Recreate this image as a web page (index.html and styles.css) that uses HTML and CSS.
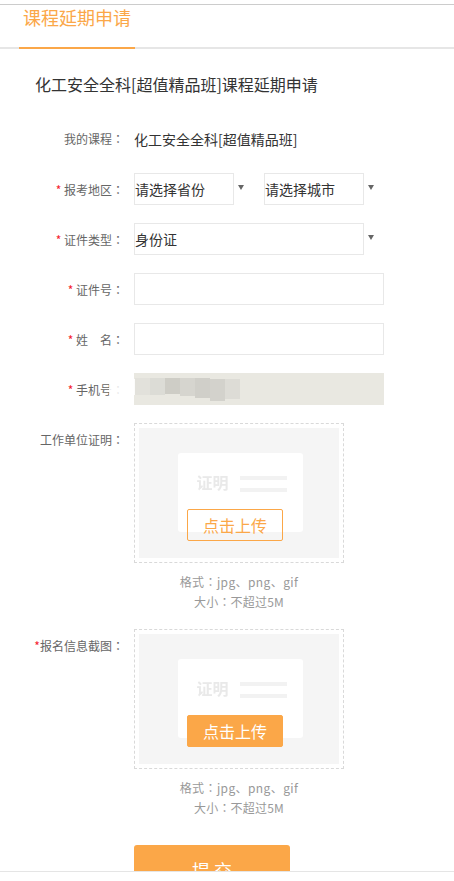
FILE: index.html
```html
<!DOCTYPE html>
<html lang="zh-CN">
<head>
    <meta charset="UTF-8">
    <title>课程延期申请</title>
    <link rel="stylesheet" href="styles.css">
</head>
<body>
    <div class="page">
        <div class="tabs">
            <div class="tab">课程延期申请</div>
        </div>
        <h2 class="heading">化工安全全科[超值精品班]课程延期申请</h2>

        <div class="row row-text">
            <div class="label">我的课程<span class="colon" lang="zh-Hant">：</span></div>
            <div class="course">化工安全全科[超值精品班]</div>
        </div>

        <div class="row">
            <div class="label"><span class="star">* </span>报考地区<span class="colon" lang="zh-Hant">：</span></div>
            <div class="select-wrap">
                <select class="field small"><option>请选择省份</option></select>
                <i class="arrow"></i>
            </div>
            <div class="select-wrap second">
                <select class="field small"><option>请选择城市</option></select>
                <i class="arrow"></i>
            </div>
        </div>

        <div class="row">
            <div class="label"><span class="star">* </span>证件类型<span class="colon" lang="zh-Hant">：</span></div>
            <div class="select-wrap">
                <select class="field medium"><option>身份证</option></select>
                <i class="arrow"></i>
            </div>
        </div>

        <div class="row">
            <div class="label"><span class="star">* </span>证件号<span class="colon" lang="zh-Hant">：</span></div>
            <input class="field large" type="text">
        </div>

        <div class="row">
            <div class="label"><span class="star">* </span>姓&emsp;名<span class="colon" lang="zh-Hant">：</span></div>
            <input class="field large" type="text">
        </div>

        <div class="row">
            <div class="label"><span class="star">* </span>手机号<span class="colon" lang="zh-Hant">：</span></div>
            <input class="field large phone" type="text">
            <svg class="smudge" width="150" height="42" viewBox="0 0 150 42">
                <rect x="9" y="11" width="26" height="16" fill="#fff" opacity=".85"/>
                <rect x="35" y="10" width="15" height="17" fill="#e2e1db"/>
                <rect x="50" y="10" width="15" height="17" fill="#dcdcd6"/>
                <rect x="65" y="10" width="15" height="16" fill="#cecdc6"/>
                <rect x="80" y="10" width="15" height="18" fill="#d6d5cf"/>
                <rect x="95" y="10" width="15" height="20" fill="#d0cfc9"/>
                <rect x="110" y="11" width="15" height="22" fill="#d3d2cc"/>
                <rect x="125" y="11" width="15" height="20" fill="#dddcd6"/>
            </svg>
        </div>

        <div class="row upload-row">
            <div class="label">工作单位证明<span class="colon" lang="zh-Hant">：</span></div>
            <div class="upload">
                <div class="upload-box">
                    <div class="preview">
                        <div class="card">
                            <span class="card-text">证明</span>
                            <span class="card-lines"><i></i><i></i></span>
                        </div>
                        <button class="upload-btn">点击上传</button>
                    </div>
                </div>
                <p class="hint">格式<span class="colon" lang="zh-Hant">：</span>jpg、png、gif<br>大小<span class="colon" lang="zh-Hant">：</span>不超过5M</p>
            </div>
        </div>

        <div class="row upload-row">
            <div class="label"><span class="star">*</span>报名信息截图<span class="colon" lang="zh-Hant">：</span></div>
            <div class="upload">
                <div class="upload-box">
                    <div class="preview">
                        <div class="card">
                            <span class="card-text">证明</span>
                            <span class="card-lines"><i></i><i></i></span>
                        </div>
                        <button class="upload-btn solid">点击上传</button>
                    </div>
                </div>
                <p class="hint">格式<span class="colon" lang="zh-Hant">：</span>jpg、png、gif<br>大小<span class="colon" lang="zh-Hant">：</span>不超过5M</p>
            </div>
        </div>

        <button class="submit">提 交</button>
    </div>
    <div class="bottom"></div>
</body>
</html>
```

FILE: styles.css
```css
html, body {
    margin: 0;
    padding: 0;
    overflow: hidden;
    background: #fff;
}

body {
    padding-top: 4px;
    font-family: "Noto Sans CJK SC", sans-serif;
    color: #333;
}

.page {
    height: 866px;
    overflow: hidden;
    border-top: 1px solid #ccc;
}

.bottom {
    height: 9px;
    border-top: 1px solid #e5e5e5;
}

.tabs {
    height: 42px;
    border-bottom: 2px solid #e6e6e6;
    position: relative;
}

.tab {
    position: absolute;
    left: 19px;
    top: 0;
    width: 112px;
    height: 42px;
    border-bottom: 2px solid #fba748;
    padding-left: 4px;
    font-size: 18px;
    line-height: 24px;
    color: #fba748;
}

.heading {
    margin: 23px 0 0 35px;
    font-size: 16px;
    font-weight: normal;
    line-height: 24px;
    color: #333;
}

.row {
    display: flex;
    align-items: flex-start;
    position: relative;
    margin-bottom: 18px;
}

.row-text {
    margin-top: 26px;
    margin-bottom: 19px;
    height: 32px;
}

.label {
    width: 124px;
    height: 32px;
    margin-right: 10px;
    flex-shrink: 0;
    text-align: right;
    font-size: 12px;
    line-height: 34px;
    color: #666;
}

.colon {
    font-family: "Noto Sans CJK TC", sans-serif;
}

.star {
    color: #f5222d;
}

.course {
    font-size: 14px;
    line-height: 34px;
    color: #333;
}

.field {
    display: block;
    box-sizing: border-box;
    height: 32px;
    margin: 0;
    padding: 0;
    background: #fff;
    border: 1px solid #e8e8e8;
    border-radius: 0;
    outline: none;
    font-family: inherit;
    font-size: 14px;
    color: #333;
    appearance: none;
}

.small {
    width: 100px;
}

.medium {
    width: 230px;
}

.large {
    width: 250px;
}

.phone {
    background: #e9e8e1;
    border-color: #e9e8e1;
}

.smudge {
    position: absolute;
    left: 100px;
    top: -5px;
}

.select-wrap {
    position: relative;
}

.second {
    margin-left: 30px;
}

.arrow {
    position: absolute;
    top: 12px;
    right: -10px;
    width: 0;
    height: 0;
    border-left: 3.5px solid transparent;
    border-right: 3.5px solid transparent;
    border-top: 5px solid #666;
}

.upload-row {
    margin-bottom: 0;
}

.upload {
    width: 210px;
    text-align: center;
}

.upload-box {
    box-sizing: border-box;
    width: 210px;
    height: 140px;
    padding: 4px;
    border: 1px dashed #d9d9d9;
}

.preview {
    position: relative;
    height: 130px;
    background: #f5f5f5;
    display: flex;
    justify-content: center;
    padding: 25px 0 0 2px;
    box-sizing: border-box;
}

.card {
    width: 125px;
    height: 79px;
    background: #fff;
    border-radius: 3px;
    display: flex;
    align-items: flex-start;
    padding: 20px 16px 0 19px;
    box-sizing: border-box;
    gap: 11px;
}

.card-text {
    font-size: 16px;
    font-weight: bold;
    line-height: 19px;
    color: #e9e9e9;
    filter: blur(.4px);
}

.card-lines {
    flex: 1;
    display: flex;
    flex-direction: column;
    padding-top: 3px;
}

.card-lines i {
    display: block;
    height: 4px;
    margin-bottom: 8px;
    background: #f2f2f2;
}

.upload-btn {
    position: absolute;
    left: 48px;
    top: 81px;
    box-sizing: border-box;
    width: 96px;
    height: 32px;
    padding: 0;
    background: transparent;
    border: 1px solid #fba748;
    border-radius: 2px;
    font-family: inherit;
    font-size: 16px;
    color: #fba748;
}

.upload-btn.solid {
    background: #fba748;
    color: #fff;
}

.hint {
    margin: 9px 0 17px;
    font-size: 12px;
    line-height: 20px;
    letter-spacing: .2px;
    color: #999;
}

.hint::first-line {
    letter-spacing: .4px;
}

.submit {
    display: block;
    box-sizing: border-box;
    width: 156px;
    height: 46px;
    margin: 10px 0 0 134px;
    padding: 4px 0 0;
    background: #fba748;
    border: none;
    border-radius: 3px;
    font-family: inherit;
    font-size: 18px;
    color: #fff;
}
```
